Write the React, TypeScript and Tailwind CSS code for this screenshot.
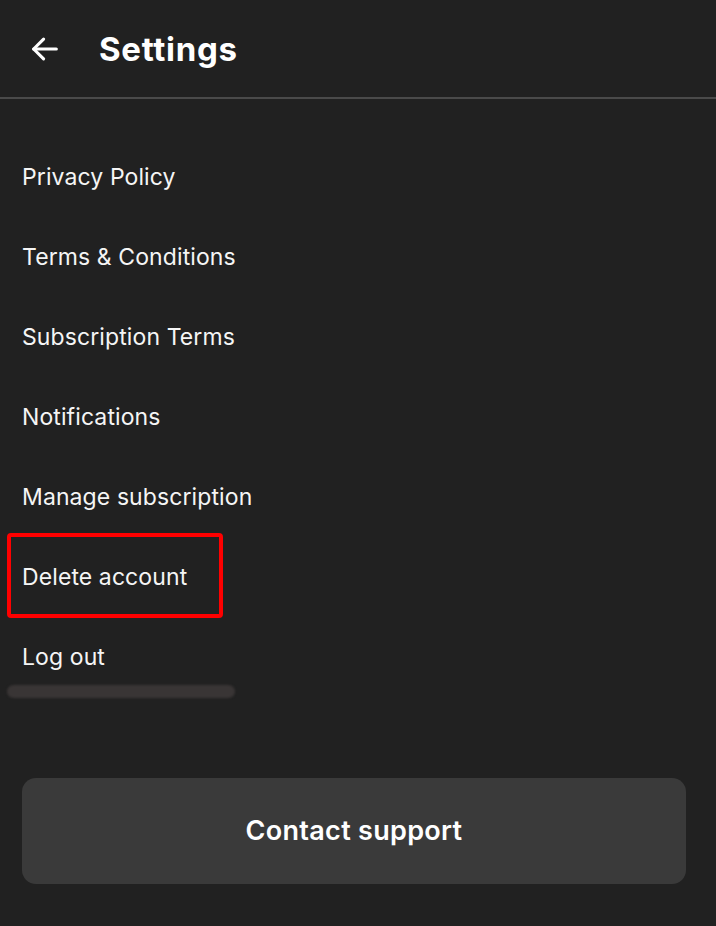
import React from "react";

const items = [
  "Privacy Policy",
  "Terms & Conditions",
  "Subscription Terms",
  "Notifications",
  "Manage subscription",
  "Delete account",
  "Log out",
];

export default function App() {
  return (
    <div
      className="w-[716px] h-[926px] bg-[#212121] text-white flex flex-col overflow-hidden"
      style={{ fontFamily: "Inter, 'Noto Sans', sans-serif" }}
    >
      <div className="h-[97px] flex items-center shrink-0">
        <svg
          width="34"
          height="34"
          viewBox="0 0 24 24"
          fill="none"
          stroke="white"
          strokeWidth="2.2"
          strokeLinecap="round"
          strokeLinejoin="round"
          className="ml-[28px]"
        >
          <path d="M20 12H4" />
          <path d="M11 5l-7 7 7 7" />
        </svg>
        <div className="ml-[37px] text-[33px] font-bold tracking-[0.7px] mt-[3px]">Settings</div>
      </div>
      <div className="h-[2px] bg-[#4a4a4a] shrink-0" />
      <div className="flex flex-col pt-[38px]">
        {items.map((t) => (
          <div key={t} className="relative h-[80px] flex items-center pl-[22px] text-[23px] tracking-[0.1px] text-[#f5f5f5]">
            {t}
            {t === "Delete account" && (
              <div className="absolute left-[7px] top-[-4px] w-[216px] h-[85px] border-[4px] border-[#ff0000] rounded-[4px]" />
            )}
            {t === "Log out" && (
              <div className="absolute left-[7px] top-[68px] w-[228px] h-[13px] rounded-full bg-[#393535] blur-[1px]" />
            )}
          </div>
        ))}
      </div>
      <div className="pl-[22px] pr-[30px] mt-[81px]">
        <div className="h-[106px] rounded-[14px] bg-[#3a3a3a] flex items-center justify-center text-[27px] font-semibold tracking-[0.3px]">
          Contact support
        </div>
      </div>
    </div>
  );
}
